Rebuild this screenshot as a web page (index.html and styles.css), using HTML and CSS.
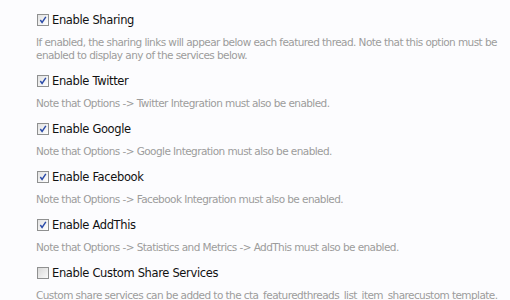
FILE: index.html
```html
<!DOCTYPE html>
<html lang="en">
<head>
  <meta charset="UTF-8">
  <title>Sharing Options</title>
  <link rel="stylesheet" href="styles.css">
</head>
<body>
  <ul class="options">
    <li class="option">
      <label class="option-label">
        <span class="box checked"><svg viewBox="0 0 12 12"><path d="M2.8 6 L4.9 9 L9.4 2.2" /></svg></span>
        Enable Sharing
      </label>
      <p class="hint">If enabled, the sharing links will appear below each featured thread. Note that this option must be enabled to display any of the services below.</p>
    </li>
    <li class="option">
      <label class="option-label">
        <span class="box checked"><svg viewBox="0 0 12 12"><path d="M2.8 6 L4.9 9 L9.4 2.2" /></svg></span>
        Enable Twitter
      </label>
      <p class="hint">Note that Options -&gt; Twitter Integration must also be enabled.</p>
    </li>
    <li class="option">
      <label class="option-label">
        <span class="box checked"><svg viewBox="0 0 12 12"><path d="M2.8 6 L4.9 9 L9.4 2.2" /></svg></span>
        Enable Google
      </label>
      <p class="hint">Note that Options -&gt; Google Integration must also be enabled.</p>
    </li>
    <li class="option">
      <label class="option-label">
        <span class="box checked"><svg viewBox="0 0 12 12"><path d="M2.8 6 L4.9 9 L9.4 2.2" /></svg></span>
        Enable Facebook
      </label>
      <p class="hint">Note that Options -&gt; Facebook Integration must also be enabled.</p>
    </li>
    <li class="option">
      <label class="option-label">
        <span class="box checked"><svg viewBox="0 0 12 12"><path d="M2.8 6 L4.9 9 L9.4 2.2" /></svg></span>
        Enable AddThis
      </label>
      <p class="hint">Note that Options -&gt; Statistics and Metrics -&gt; AddThis must also be enabled.</p>
    </li>
    <li class="option">
      <label class="option-label">
        <span class="box"></span>
        Enable Custom Share Services
      </label>
      <p class="hint">Custom share services can be added to the cta_featuredthreads_list_item_sharecustom template.</p>
    </li>
  </ul>
</body>
</html>
```

FILE: styles.css
```css
body {
  margin: 0;
  background-color: #fcfcfe;
  font-family: "DejaVu Sans", Verdana, sans-serif;
}
.options {
  list-style: none;
  margin: 0;
  padding: 12px 4px 0 36px;
}
.option {
  margin-bottom: 11px;
}
.option-label {
  display: flex;
  align-items: center;
  gap: 3px;
  font-size: 11.5px;
  letter-spacing: -0.35px;
  line-height: 16px;
  color: #111111;
}
.box {
  box-sizing: border-box;
  width: 12px;
  height: 12px;
  margin-left: 1px;
  border: 1px solid #8f9090;
  background: linear-gradient(135deg, #d8d8d8, #fafafa);
}
.box.checked {
  background: linear-gradient(135deg, #e2e2e2, #ffffff);
}
.box svg {
  display: block;
  width: 10px;
  height: 10px;
}
.box path {
  fill: none;
  stroke: #2a4aa8;
  stroke-width: 1.7;
}
.hint {
  margin: 8px 0 0;
  font-size: 10.5px;
  letter-spacing: -0.57px;
  line-height: 13px;
  color: #9c9c9c;
}
```
